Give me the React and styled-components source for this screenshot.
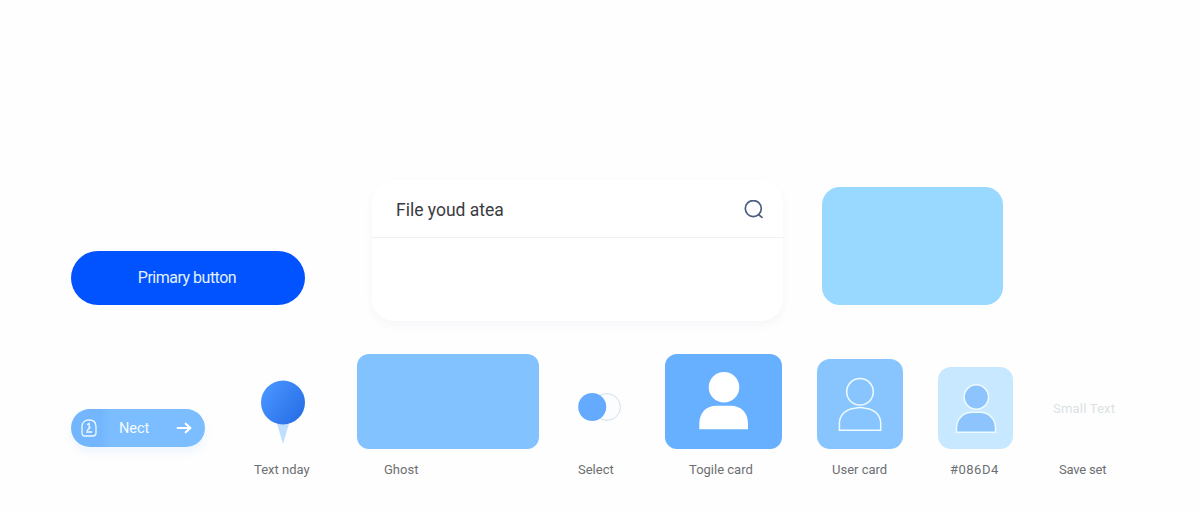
import React from "react";
import styled, { createGlobalStyle } from "styled-components";

const GlobalStyle = createGlobalStyle`
  * { box-sizing: border-box; }
  body { margin: 0; background: #fefefe; font-family: Roboto, "Liberation Sans", sans-serif; }
`;

const Page = styled.main`
  width: 1200px;
  height: 512px;
  padding: 180px 0 0 71px;
  overflow: hidden;
`;

const TopRow = styled.section`
  display: flex;
  align-items: flex-end;
  height: 141px;
`;

const PrimaryButton = styled.button`
  width: 234px;
  height: 54px;
  margin: 0 67px 16px 0;
  padding: 0 2px 2px 0;
  border: 0;
  border-radius: 27px;
  background: #0053ff;
  color: #e2f1ff;
  font: 400 16px Roboto, sans-serif;
  letter-spacing: -0.5px;
`;

const SearchCard = styled.div`
  width: 411px;
  height: 141px;
  border-radius: 22px;
  background: #fff;
  box-shadow: 0 4px 9px rgba(60, 70, 150, 0.045);
`;

const SearchBar = styled.div`
  display: flex;
  align-items: center;
  justify-content: space-between;
  height: 58px;
  padding: 3px 19px 0 24px;
  border-bottom: 1px solid #eff1f3;
  color: #3a3b3f;
  font-size: 17.5px;
`;

const Swatch = styled.div`
  width: 181px;
  height: 118px;
  margin: 0 0 16px 39px;
  border-radius: 18px;
  background: #99d8ff;
`;

const BottomRow = styled.section`
  display: grid;
  grid-template-columns: 183px 103px 221px 87px 152px 121px 115px 70px;
  margin-top: 33px;
`;

const Visual = styled.div`
  display: flex;
  align-items: flex-end;
  height: 95px;
  padding-left: ${(p) => p.$indent || 0}px;
  padding-bottom: ${(p) => p.$lift || 0}px;
`;

const Label = styled.div`
  height: 16px;
  margin-top: 13px;
  padding-left: ${(p) => p.$indent || 0}px;
  color: #6c6f72;
  font-size: 13px;
  line-height: 16px;
  letter-spacing: ${(p) => p.$tracking || 0}px;
  white-space: nowrap;
`;

const NextButton = styled.button`
  display: flex;
  align-items: center;
  width: 134px;
  height: 38px;
  padding: 0 13px 0 10px;
  border: 0;
  border-radius: 19px;
  background: linear-gradient(90deg, #73b6fd 0, #73b6fd 22%, #7bbdff 30%);
  box-shadow: 0 5px 10px rgba(90, 160, 250, 0.1);
  color: #f4fbff;
  font: 400 14.5px Roboto, sans-serif;

  span { flex: 1; padding-left: 22px; text-align: left; }
`;

const Tile = styled.div`
  display: flex;
  justify-content: center;
  width: ${(p) => p.$w}px;
  height: ${(p) => p.$h}px;
  border-radius: ${(p) => p.$r}px;
  background: ${(p) => p.$bg};
`;

const SmallText = styled.span`
  color: #dbe2e5;
  font-size: 13px;
  line-height: 16px;
  letter-spacing: 0.2px;
  white-space: nowrap;
`;

const Drawing = styled.svg`
  display: block;
  flex: none;
`;

function Item({ label, indent, tracking, visualIndent, lift, children }) {
  return (
    <div>
      <Visual $indent={visualIndent} $lift={lift}>{children}</Visual>
      <Label $indent={indent} $tracking={tracking}>{label}</Label>
    </div>
  );
}

function SearchIcon() {
  return (
    <Drawing width="20" height="20" viewBox="0 0 20 20" fill="none" stroke="#4b5e80" strokeWidth="1.7" strokeLinecap="round">
      <circle cx="9.3" cy="8.6" r="8" />
      <path d="m14.4 14.5 3.6 2.9" />
    </Drawing>
  );
}

function BadgeIcon() {
  return (
    <Drawing width="16" height="18" viewBox="0 0 16 18" fill="none" stroke="#effaff" strokeWidth="1.3" strokeLinejoin="round">
      <path d="M1 7.5C1 3.2 4 1 8 1s7 2.2 7 6.5V14c0 2-1 3-3 3H4c-2 0-3-1-3-3Z" />
      <path d="M8.2 3.8V9M6.2 5.8l2-1.5M9.5 8 6 11.8M5.2 13h6" />
    </Drawing>
  );
}

function ArrowIcon() {
  return (
    <Drawing width="16" height="14" viewBox="0 0 16 14" fill="none" stroke="#fff" strokeWidth="2.1" strokeLinecap="round" strokeLinejoin="round">
      <path d="M1.6 7h12.4M9.7 2.7 14.4 7l-4.7 4.3" />
    </Drawing>
  );
}

function PinIcon() {
  return (
    <Drawing width="44" height="65" viewBox="0 0 44 65">
      <defs>
        <linearGradient id="pin" x1="0.1" y1="0.2" x2="0.9" y2="0.8">
          <stop stopColor="#4793ff" />
          <stop offset="1" stopColor="#2970e7" />
        </linearGradient>
      </defs>
      <path d="M15.5 42h13L22 64Z" fill="#bfdfff" />
      <circle cx="22" cy="22.5" r="22" fill="url(#pin)" />
    </Drawing>
  );
}

function ToggleIcon() {
  return (
    <Drawing width="44" height="30" viewBox="0 0 44 30">
      <circle cx="29" cy="15" r="13.4" fill="#fbfdff" stroke="#d3dfeb" />
      <circle cx="14.2" cy="15" r="14" fill="#64aaff" />
    </Drawing>
  );
}

export default function App() {
  return (
    <Page>
      <GlobalStyle />
      <TopRow>
        <PrimaryButton>Primary button</PrimaryButton>
        <SearchCard>
          <SearchBar><span>File youd atea</span><SearchIcon /></SearchBar>
        </SearchCard>
        <Swatch />
      </TopRow>
      <BottomRow>
        <Visual $lift={2}>
          <NextButton><BadgeIcon /><span>Nect</span><ArrowIcon /></NextButton>
        </Visual>
        <Item label="Text nday" visualIndent={7} lift={4}><PinIcon /></Item>
        <Item label="Ghost" indent={27}><Tile $w={181.5} $h={95} $r={12} $bg="#82c2ff" /></Item>
        <Item label="Select" lift={27}><ToggleIcon /></Item>
        <Item label="Togile card" indent={24}>
          <Tile $w={116.5} $h={95} $r={12} $bg="#67afff">
            <Drawing width="117" height="95" viewBox="0 0 117 95" fill="#fff">
              <circle cx="59" cy="33.3" r="15.3" />
              <path d="M34.3 75.3V70c0-11.5 7-18.2 17.2-18.2h14.2C76 51.8 83 58.5 83 70v5.3Z" />
            </Drawing>
          </Tile>
        </Item>
        <Item label="User card" indent={15}>
          <Tile $w={86} $h={90} $r={13} $bg="#88c5ff">
            <Drawing width="86" height="90" viewBox="0 0 86 90" fill="none" stroke="#effbff" strokeWidth="1.5">
              <circle cx="43" cy="32.8" r="13.3" />
              <path d="M38 49.2C28 50 22.4 57 22.4 64.5v6.8h41.3v-6.8c0-7.5-5.6-14.5-15.7-15.3-3.3-1-6.6-1-10 0Z" />
            </Drawing>
          </Tile>
        </Item>
        <Item label="#086D4" indent={12} tracking={0.5}>
          <Tile $w={75} $h={82} $r={13} $bg="#c8e8ff">
            <Drawing width="75" height="82" viewBox="0 0 75 82" fill="#8dc4fd" stroke="#eefaff" strokeWidth="1.5">
              <path d="M18.5 65.2V61c0-9.5 7-15.7 15.8-15.7h7.4c8.8 0 15.8 6.2 15.8 15.7v4.2Z" />
              <circle cx="38.3" cy="30" r="12.2" />
            </Drawing>
          </Tile>
        </Item>
        <Item label="Save set" indent={6} tracking={-0.2} lift={32}><SmallText>Small Text</SmallText></Item>
      </BottomRow>
    </Page>
  );
}
